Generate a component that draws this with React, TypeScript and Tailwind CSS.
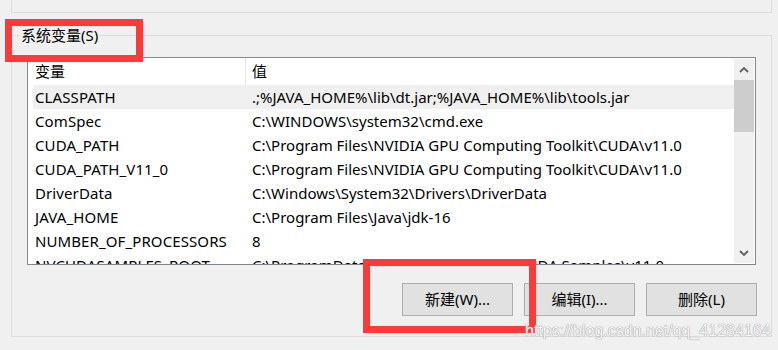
import React from "react";

const rows: [string, string][] = [
  ["CLASSPATH", ".;%JAVA_HOME%\\lib\\dt.jar;%JAVA_HOME%\\lib\\tools.jar"],
  ["ComSpec", "C:\\WINDOWS\\system32\\cmd.exe"],
  ["CUDA_PATH", "C:\\Program Files\\NVIDIA GPU Computing Toolkit\\CUDA\\v11.0"],
  ["CUDA_PATH_V11_0", "C:\\Program Files\\NVIDIA GPU Computing Toolkit\\CUDA\\v11.0"],
  ["DriverData", "C:\\Windows\\System32\\Drivers\\DriverData"],
  ["JAVA_HOME", "C:\\Program Files\\Java\\jdk-16"],
  ["NUMBER_OF_PROCESSORS", "8"],
  ["NVCUDASAMPLES_ROOT", "C:\\ProgramData\\NVIDIA Corporation\\CUDA Samples\\v11.0"],
];

function Chevron({ down }: { down?: boolean }) {
  return (
    <svg width="10" height="6" viewBox="0 0 10 6" className="block">
      <path
        d={down ? "M1 1 L5 5 L9 1" : "M1 5 L5 1 L9 5"}
        fill="none"
        stroke="#606060"
        strokeWidth="1.8"
      />
    </svg>
  );
}

export default function App() {
  return (
    <div
      className="relative w-[778px] h-[350px] overflow-hidden bg-[#f0f0f0] text-black text-[15px]"
      style={{ fontFamily: '"Noto Sans", "Noto Sans CJK SC", sans-serif' }}
    >
      {/* previous group box bottom */}
      <div className="ml-[11px] w-[761px] h-[13px] border-l border-r border-b border-[#dcdcdc]" />

      {/* system variables group */}
      <fieldset className="ml-[11px] mt-[12px] w-[761px] h-[312px] border border-[#dcdcdc] p-0 m-0">
        <legend className="ml-[8px] px-[1px] leading-[20px] text-[15px]">系统变量(S)</legend>

        {/* list box */}
        <div className="ml-[15px] mt-[12px] w-[729px] h-[208px] border border-[#828790] bg-white flex">
          <div className="flex-1 overflow-hidden pl-[5px]">
            <div className="flex h-[27px] items-center">
              <div className="w-[212px] pl-[2px]">变量</div>
              <div className="w-px h-full bg-[#e5e5e5]" />
              <div className="pl-[6px]">值</div>
            </div>
            {rows.map(([k, v], i) => (
              <div
                key={k}
                className={
                  "flex h-[24px] items-center whitespace-nowrap tracking-[0.1px] " +
                  (i === 0 ? "bg-[#f0f0f0]" : "")
                }
              >
                <div className="w-[213px] pl-[2px]">{k}</div>
                <div className="pl-[6px] tracking-normal">{v}</div>
              </div>
            ))}
          </div>
          <div className="w-[20px] mt-px mb-px mr-px bg-[#f0f0f0] flex flex-col">
            <div className="h-[21px] flex items-center justify-center">
              <Chevron />
            </div>
            <div className="h-[52px] bg-[#cdcdcd]" />
            <div className="flex-1" />
            <div className="h-[21px] flex items-center justify-center">
              <Chevron down />
            </div>
          </div>
        </div>

        {/* buttons */}
        <div className="mt-[18px] w-[745px] flex justify-end gap-[11px]">
          {["新建(W)...", "编辑(I)...", "删除(L)"].map((t) => (
            <button
              key={t}
              className="w-[111px] h-[33px] border border-[#adadad] bg-[#e1e1e1] flex items-center justify-center"
            >
              {t}
            </button>
          ))}
        </div>
      </fieldset>

      {/* red annotation boxes */}
      <div className="absolute left-[5px] top-[19px] w-[138px] h-[43px] border-[7px] border-[#fd3a3a]" />
      <div className="absolute left-[363px] top-[259px] w-[173px] h-[74px] border-[7px] border-[#fd3a3a]" />

      {/* watermark */}
      <div
        className="absolute left-[525px] top-[321px] text-[16px] leading-[20px] text-[#f6f6f6] [text-shadow:0_0_1px_#8a8a8a,0_0_1px_#b0b0b0]"
        style={{ fontFamily: '"Liberation Sans", Arial, sans-serif' }}
      >
        https://blog.csdn.net/qq_41284164
      </div>
    </div>
  );
}
